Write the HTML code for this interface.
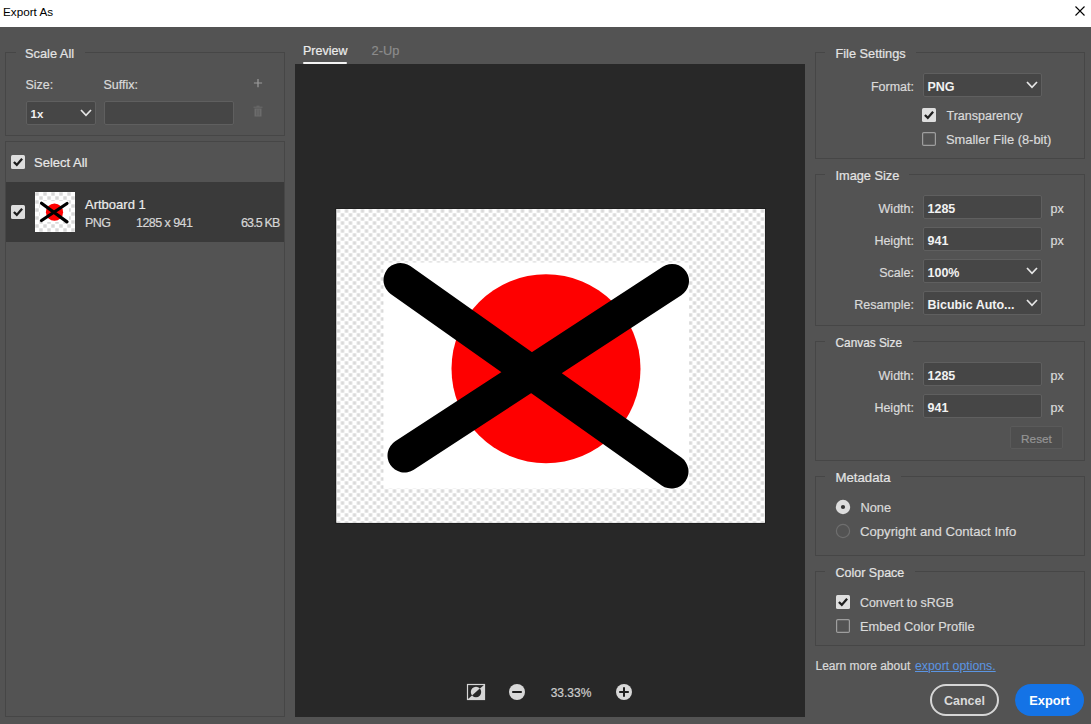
<!DOCTYPE html>
<html><head><meta charset="utf-8"><style>
html,body{margin:0;padding:0;}
body{width:1091px;height:724px;position:relative;overflow:hidden;background:#535353;font-family:"Liberation Sans",sans-serif;}
.r{position:absolute;}
.t{position:absolute;white-space:nowrap;line-height:20px;}
svg{display:block;}
</style></head><body>
<div class="r" style="left:0px;top:0px;width:1091px;height:27px;background:#fff"></div>
<div class="t" style="top:1.55px;font-size:11.7px;color:#000;font-weight:400;left:3px;">Export As</div>
<svg class="r" style="left:1074px;top:5px" width="12" height="12" viewBox="0 0 12 12"><path d="M1.5 1.5L10.5 10.5M10.5 1.5L1.5 10.5" stroke="#000" stroke-width="1.1"/></svg>
<div class="r" style="left:5px;top:52px;width:280px;height:84px;border:1px solid #464646;box-sizing:border-box"></div>
<div class="r" style="left:16px;top:50px;width:69px;height:4px;background:#535353"></div>
<div class="t" style="top:43.56px;font-size:12.8px;color:#e4e4e4;font-weight:400;-webkit-text-stroke:0.2px currentColor;left:25px;">Scale All</div>
<div class="t" style="top:74.67px;font-size:12.5px;color:#dadada;font-weight:400;-webkit-text-stroke:0.2px currentColor;left:25.5px;">Size:</div>
<div class="t" style="top:74.67px;font-size:12.5px;color:#dadada;font-weight:400;-webkit-text-stroke:0.2px currentColor;left:103.5px;">Suffix:</div>
<svg class="r" style="left:252px;top:77px" width="12" height="12" viewBox="0 0 12 12"><path d="M6 2V10.2M1.9 6H10.1" stroke="#9c9c9c" stroke-width="1.2"/></svg>
<svg class="r" style="left:252px;top:105px" width="12" height="13" viewBox="0 0 12 13"><path d="M1.5 2.2H10.5M4.5 1.2H7.5" stroke="#6c6c6c" stroke-width="1"/><path d="M2.5 3.5H9.5V11.5H2.5Z" fill="#6c6c6c"/><path d="M4.5 4.5V10.5M6 4.5V10.5M7.5 4.5V10.5" stroke="#5a5a5a" stroke-width="0.6"/></svg>
<div class="r" style="left:26px;top:101px;width:70px;height:24px;background:#464646;border:1px solid #5f5f5f;border-radius:2px;box-sizing:border-box"></div>
<div class="t" style="top:104.32px;font-size:11.5px;color:#f2f2f2;font-weight:700;left:30.5px;">1x</div>
<svg class="r" style="left:80px;top:108.0px" width="12" height="10" viewBox="0 0 12 10"><path d="M1 2L6 7.3L11 2" fill="none" stroke="#e6e6e6" stroke-width="1.7"/></svg>
<div class="r" style="left:104px;top:101px;width:130px;height:24px;background:#464646;border:1px solid #5f5f5f;border-radius:2px;box-sizing:border-box"></div>
<div class="r" style="left:5px;top:141px;width:280px;height:576px;border:1px solid #464646;box-sizing:border-box"></div>
<svg class="r" style="left:11px;top:155px" width="14" height="14" viewBox="0 0 14 14"><rect x="0" y="0" width="14" height="14" rx="1.5" fill="#dedede"/><path d="M2.9 7L5.8 9.9L11.1 3.7" fill="none" stroke="#1e1e1e" stroke-width="2.3"/></svg>
<div class="t" style="top:152.50px;font-size:13px;color:#e8e8e8;font-weight:400;-webkit-text-stroke:0.2px currentColor;left:34px;">Select All</div>
<div class="r" style="left:6px;top:182px;width:278px;height:60px;background:#3a3a3a"></div>
<svg class="r" style="left:11px;top:205px" width="14" height="14" viewBox="0 0 14 14"><rect x="0" y="0" width="14" height="14" rx="1.5" fill="#dedede"/><path d="M2.9 7L5.8 9.9L11.1 3.7" fill="none" stroke="#1e1e1e" stroke-width="2.3"/></svg>
<svg class="r" style="left:35px;top:192px" width="40" height="40" viewBox="0 0 40 40">
<defs><pattern id="ck2" width="8" height="8" patternUnits="userSpaceOnUse"><rect width="8" height="8" fill="#fff"/><rect x="0.3" y="0.3" width="3.4" height="3.4" fill="#d8d8d8"/><rect x="4.3" y="4.3" width="3.4" height="3.4" fill="#d8d8d8"/></pattern></defs>
<rect width="40" height="40" fill="url(#ck2)"/>
<rect x="5" y="9" width="29" height="21" fill="#fff"/>
<circle cx="19.5" cy="20.2" r="8.6" fill="#f00"/>
<path d="M6.5 11.2L32 29.9M6.5 28.5L32 11.5" stroke="#000" stroke-width="3.2" stroke-linecap="round"/>
</svg>
<div class="t" style="top:194.50px;font-size:13px;color:#ececec;font-weight:400;-webkit-text-stroke:0.2px currentColor;left:85px;">Artboard 1</div>
<div class="t" style="top:212.67px;font-size:12.5px;color:#d6d6d6;font-weight:400;-webkit-text-stroke:0.2px currentColor;left:85px;letter-spacing:-0.6px;">PNG</div>
<div class="t" style="top:212.67px;font-size:12.5px;color:#d6d6d6;font-weight:400;-webkit-text-stroke:0.2px currentColor;left:136px;letter-spacing:-0.55px;">1285 x 941</div>
<div class="t" style="top:212.67px;font-size:12.5px;color:#d6d6d6;font-weight:400;-webkit-text-stroke:0.2px currentColor;right:811.5px;letter-spacing:-0.85px;">63.5 KB</div>
<div class="t" style="top:41.07px;font-size:12.5px;color:#ececec;font-weight:400;-webkit-text-stroke:0.2px currentColor;left:303px;">Preview</div>
<div class="r" style="left:303px;top:62px;width:44px;height:2px;background:#f4f4f4;border-radius:1px"></div>
<div class="t" style="top:41.16px;font-size:12.8px;color:#8c8c8c;font-weight:400;-webkit-text-stroke:0.2px currentColor;left:371.6px;">2-Up</div>
<div class="r" style="left:295px;top:64px;width:510px;height:653px;background:#282828"></div>
<div class="r" style="left:335px;top:208px;width:431px;height:316px;background:#1f1f1f"></div>
<svg class="r" style="left:336px;top:208px" width="430" height="316" viewBox="336 208 430 316">
<defs><pattern id="ck" x="336.5" y="209" width="8" height="8" patternUnits="userSpaceOnUse"><rect width="8" height="8" fill="#fff"/><rect x="0.3" y="0.3" width="3.4" height="3.4" fill="#d9d9d9"/><rect x="4.3" y="4.3" width="3.4" height="3.4" fill="#d9d9d9"/></pattern>
<filter id="bl" x="-1%" y="-1%" width="102%" height="102%"><feGaussianBlur stdDeviation="0.55"/></filter>
<clipPath id="imgclip"><rect x="336.5" y="209" width="428.3" height="313.7"/></clipPath></defs>
<rect x="336.5" y="209" width="428.3" height="313.7" fill="#fff"/>
<g clip-path="url(#imgclip)"><rect x="330" y="203" width="440" height="325" fill="url(#ck)" filter="url(#bl)"/></g>
<rect x="383.5" y="262.5" width="305.5" height="226" fill="#fff"/>
<circle cx="546" cy="368.8" r="94.5" fill="#fe0000"/>
<path d="M400.5 280L671.5 471.5M404.5 455.5L672 281" stroke="#000" stroke-width="34" stroke-linecap="round"/>
</svg>
<svg class="r" style="left:466px;top:683px" width="20" height="18" viewBox="0 0 20 18">
<rect x="1.5" y="1.5" width="17" height="15" fill="none" stroke="#d6d6d6" stroke-width="1.2"/>
<path d="M1.5 16.5L18.5 1.5V16.5Z" fill="#d6d6d6"/>
<defs><clipPath id="ul"><path d="M0 0H20L0 18Z"/></clipPath><clipPath id="lr"><path d="M20 0V18H0Z"/></clipPath></defs>
<circle cx="10" cy="9" r="5.2" fill="#d6d6d6" clip-path="url(#ul)"/>
<circle cx="10" cy="9" r="5.2" fill="#282828" clip-path="url(#lr)"/>
</svg>
<svg class="r" style="left:508px;top:683px" width="18" height="18" viewBox="0 0 18 18"><circle cx="9" cy="9" r="8" fill="#d8d8d8"/><path d="M4.2 9H13.8" stroke="#1e1e1e" stroke-width="2"/></svg>
<div class="t" style="top:682.64px;font-size:12px;color:#cdcdcd;font-weight:400;-webkit-text-stroke:0.2px currentColor;left:371px;width:400px;text-align:center;">33.33%</div>
<svg class="r" style="left:615px;top:683px" width="18" height="18" viewBox="0 0 18 18"><circle cx="9" cy="9" r="8" fill="#d8d8d8"/><path d="M4.2 9H13.8M9 4.2V13.8" stroke="#1e1e1e" stroke-width="2"/></svg>
<div class="r" style="left:815px;top:52px;width:270px;height:107px;border:1px solid #464646;box-sizing:border-box"></div>
<div class="r" style="left:825px;top:51px;width:91px;height:4px;background:#535353"></div>
<div class="t" style="top:43.88px;font-size:12.75px;color:#e4e4e4;font-weight:400;-webkit-text-stroke:0.2px currentColor;left:835.5px;">File Settings</div>
<div class="t" style="top:76.67px;font-size:12.5px;color:#dadada;font-weight:400;-webkit-text-stroke:0.2px currentColor;right:177px;">Format:</div>
<div class="r" style="left:923px;top:73px;width:119px;height:24px;background:#464646;border:1px solid #5f5f5f;border-radius:2px;box-sizing:border-box"></div>
<div class="t" style="top:76.97px;font-size:12.5px;color:#f2f2f2;font-weight:700;left:927.5px;">PNG</div>
<svg class="r" style="left:1026px;top:80px" width="12" height="10" viewBox="0 0 12 10"><path d="M1 2L6 7.3L11 2" fill="none" stroke="#e6e6e6" stroke-width="1.7"/></svg>
<svg class="r" style="left:922px;top:108px" width="14" height="14" viewBox="0 0 14 14"><rect x="0" y="0" width="14" height="14" rx="1.5" fill="#dedede"/><path d="M2.9 7L5.8 9.9L11.1 3.7" fill="none" stroke="#1e1e1e" stroke-width="2.3"/></svg>
<div class="t" style="top:105.67px;font-size:12.5px;color:#dadada;font-weight:400;-webkit-text-stroke:0.2px currentColor;left:946.5px;">Transparency</div>
<svg class="r" style="left:922px;top:132px" width="14" height="14" viewBox="0 0 14 14"><rect x="0.6" y="0.6" width="12.8" height="12.8" rx="1.2" fill="none" stroke="#9e9e9e" stroke-width="1.2"/></svg>
<div class="t" style="top:129.53px;font-size:12.9px;color:#dadada;font-weight:400;-webkit-text-stroke:0.2px currentColor;left:946px;">Smaller File (8-bit)</div>
<div class="r" style="left:815px;top:174px;width:270px;height:152px;border:1px solid #464646;box-sizing:border-box"></div>
<div class="r" style="left:825px;top:173px;width:84px;height:4px;background:#535353"></div>
<div class="t" style="top:166.08px;font-size:12.75px;color:#e4e4e4;font-weight:400;-webkit-text-stroke:0.2px currentColor;left:835.5px;">Image Size</div>
<div class="t" style="top:198.87px;font-size:12.5px;color:#dadada;font-weight:400;-webkit-text-stroke:0.2px currentColor;right:177px;">Width:</div>
<div class="r" style="left:923px;top:195px;width:119px;height:24px;background:#464646;border:1px solid #5f5f5f;border-radius:2px;box-sizing:border-box"></div>
<div class="t" style="top:198.97px;font-size:12.5px;color:#f2f2f2;font-weight:700;left:927.5px;">1285</div>
<div class="t" style="top:198.87px;font-size:12.5px;color:#dadada;font-weight:400;-webkit-text-stroke:0.2px currentColor;left:1050.5px;">px</div>
<div class="t" style="top:230.87px;font-size:12.5px;color:#dadada;font-weight:400;-webkit-text-stroke:0.2px currentColor;right:177px;">Height:</div>
<div class="r" style="left:923px;top:227px;width:119px;height:24px;background:#464646;border:1px solid #5f5f5f;border-radius:2px;box-sizing:border-box"></div>
<div class="t" style="top:230.97px;font-size:12.5px;color:#f2f2f2;font-weight:700;left:927.5px;">941</div>
<div class="t" style="top:230.87px;font-size:12.5px;color:#dadada;font-weight:400;-webkit-text-stroke:0.2px currentColor;left:1050.5px;">px</div>
<div class="t" style="top:262.87px;font-size:12.5px;color:#dadada;font-weight:400;-webkit-text-stroke:0.2px currentColor;right:177px;">Scale:</div>
<div class="r" style="left:923px;top:259px;width:119px;height:24px;background:#464646;border:1px solid #5f5f5f;border-radius:2px;box-sizing:border-box"></div>
<div class="t" style="top:262.97px;font-size:12.5px;color:#f2f2f2;font-weight:700;left:927.5px;">100%</div>
<svg class="r" style="left:1026px;top:266px" width="12" height="10" viewBox="0 0 12 10"><path d="M1 2L6 7.3L11 2" fill="none" stroke="#e6e6e6" stroke-width="1.7"/></svg>
<div class="t" style="top:294.87px;font-size:12.5px;color:#dadada;font-weight:400;-webkit-text-stroke:0.2px currentColor;right:177px;">Resample:</div>
<div class="r" style="left:923px;top:291px;width:119px;height:24px;background:#464646;border:1px solid #5f5f5f;border-radius:2px;box-sizing:border-box"></div>
<div class="t" style="top:294.97px;font-size:12.5px;color:#f2f2f2;font-weight:700;left:927.5px;">Bicubic Auto...</div>
<svg class="r" style="left:1026px;top:298px" width="12" height="10" viewBox="0 0 12 10"><path d="M1 2L6 7.3L11 2" fill="none" stroke="#e6e6e6" stroke-width="1.7"/></svg>
<div class="r" style="left:815px;top:341px;width:270px;height:120px;border:1px solid #464646;box-sizing:border-box"></div>
<div class="r" style="left:825px;top:340px;width:88px;height:4px;background:#535353"></div>
<div class="t" style="top:332.89px;font-size:11.85px;color:#e4e4e4;font-weight:400;-webkit-text-stroke:0.2px currentColor;left:835.5px;">Canvas Size</div>
<div class="t" style="top:365.87px;font-size:12.5px;color:#dadada;font-weight:400;-webkit-text-stroke:0.2px currentColor;right:177px;">Width:</div>
<div class="r" style="left:923px;top:362px;width:119px;height:24px;background:#464646;border:1px solid #5f5f5f;border-radius:2px;box-sizing:border-box"></div>
<div class="t" style="top:365.97px;font-size:12.5px;color:#f2f2f2;font-weight:700;left:927.5px;">1285</div>
<div class="t" style="top:365.87px;font-size:12.5px;color:#dadada;font-weight:400;-webkit-text-stroke:0.2px currentColor;left:1050.5px;">px</div>
<div class="t" style="top:397.87px;font-size:12.5px;color:#dadada;font-weight:400;-webkit-text-stroke:0.2px currentColor;right:177px;">Height:</div>
<div class="r" style="left:923px;top:394px;width:119px;height:24px;background:#464646;border:1px solid #5f5f5f;border-radius:2px;box-sizing:border-box"></div>
<div class="t" style="top:397.97px;font-size:12.5px;color:#f2f2f2;font-weight:700;left:927.5px;">941</div>
<div class="t" style="top:397.87px;font-size:12.5px;color:#dadada;font-weight:400;-webkit-text-stroke:0.2px currentColor;left:1050.5px;">px</div>
<div class="r" style="left:1010px;top:426px;width:53px;height:23px;background:#4e4e4e;border:1px solid #5a5a5a;border-radius:2px;box-sizing:border-box"></div>
<div class="t" style="top:428.91px;font-size:11.8px;color:#959595;font-weight:400;-webkit-text-stroke:0.2px currentColor;left:836.5px;width:400px;text-align:center;">Reset</div>
<div class="r" style="left:815px;top:476px;width:270px;height:80px;border:1px solid #464646;box-sizing:border-box"></div>
<div class="r" style="left:825px;top:475px;width:76px;height:4px;background:#535353"></div>
<div class="t" style="top:468.03px;font-size:13.2px;color:#e4e4e4;font-weight:400;-webkit-text-stroke:0.2px currentColor;left:835.5px;">Metadata</div>
<svg class="r" style="left:835px;top:499px" width="16" height="16" viewBox="0 0 16 16"><circle cx="8" cy="8" r="7.2" fill="#dcdcdc"/><circle cx="8" cy="8" r="2.1" fill="#333"/></svg>
<div class="t" style="top:497.56px;font-size:12.8px;color:#dadada;font-weight:400;-webkit-text-stroke:0.2px currentColor;left:860.5px;">None</div>
<svg class="r" style="left:835px;top:523px" width="16" height="16" viewBox="0 0 16 16"><circle cx="8" cy="8" r="6.6" fill="none" stroke="#6e6e6e" stroke-width="1.2"/></svg>
<div class="t" style="top:522.44px;font-size:13.15px;color:#dadada;font-weight:400;-webkit-text-stroke:0.2px currentColor;left:860px;">Copyright and Contact Info</div>
<div class="r" style="left:815px;top:571px;width:270px;height:75px;border:1px solid #464646;box-sizing:border-box"></div>
<div class="r" style="left:825px;top:570px;width:90px;height:4px;background:#535353"></div>
<div class="t" style="top:563.17px;font-size:12.5px;color:#e4e4e4;font-weight:400;-webkit-text-stroke:0.2px currentColor;left:835.5px;">Color Space</div>
<svg class="r" style="left:836px;top:595px" width="14" height="14" viewBox="0 0 14 14"><rect x="0" y="0" width="14" height="14" rx="1.5" fill="#dedede"/><path d="M2.9 7L5.8 9.9L11.1 3.7" fill="none" stroke="#1e1e1e" stroke-width="2.3"/></svg>
<div class="t" style="top:592.70px;font-size:12.4px;color:#dadada;font-weight:400;-webkit-text-stroke:0.2px currentColor;left:860px;">Convert to sRGB</div>
<svg class="r" style="left:836px;top:619px" width="14" height="14" viewBox="0 0 14 14"><rect x="0.6" y="0.6" width="12.8" height="12.8" rx="1.2" fill="none" stroke="#9e9e9e" stroke-width="1.2"/></svg>
<div class="t" style="top:616.56px;font-size:12.8px;color:#dadada;font-weight:400;-webkit-text-stroke:0.2px currentColor;left:860px;">Embed Color Profile</div>
<div class="t" style="top:655.84px;font-size:12px;color:#dadada;font-weight:400;-webkit-text-stroke:0.2px currentColor;left:815.5px;">Learn more about</div>
<div class="t" style="top:655.74px;font-size:12.3px;color:#5b95e2;font-weight:400;-webkit-text-stroke:0.2px currentColor;left:915px;text-decoration:underline;-webkit-text-stroke:0;">export options.</div>
<div class="r" style="left:930px;top:684px;width:69px;height:32px;border:2px solid #d6d6d6;border-radius:16px;box-sizing:border-box"></div>
<div class="t" style="top:690.67px;font-size:12.5px;color:#dadada;font-weight:700;left:764.5px;width:400px;text-align:center;">Cancel</div>
<div class="r" style="left:1015px;top:684px;width:69px;height:32px;background:#1473e6;border-radius:16px"></div>
<div class="t" style="top:690.56px;font-size:12.8px;color:#ffffff;font-weight:700;left:849.5px;width:400px;text-align:center;">Export</div>

</body></html>
